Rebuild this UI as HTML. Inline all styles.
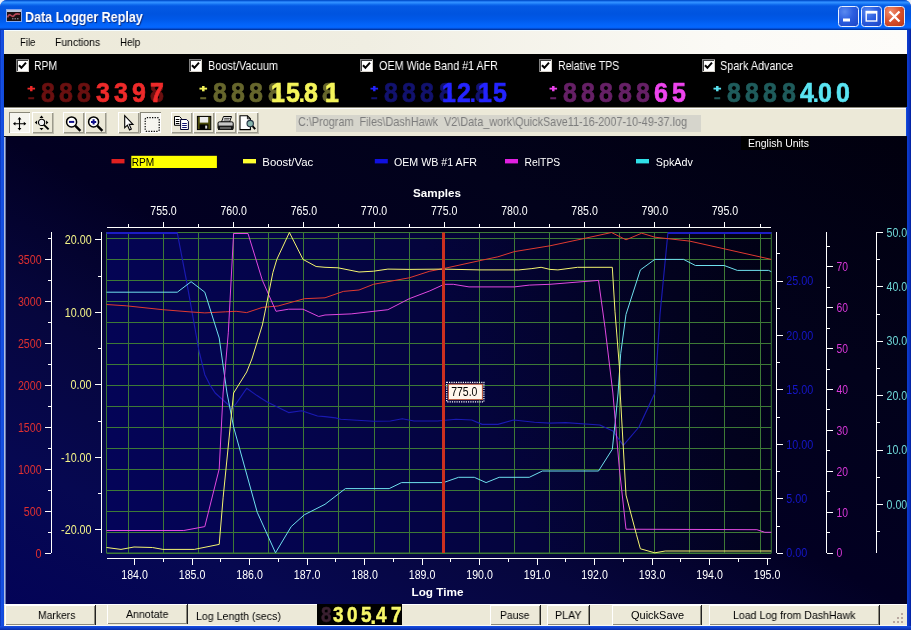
<!DOCTYPE html>
<html><head><meta charset="utf-8"><title>Data Logger Replay</title>
<style>
html,body{margin:0;padding:0}
body{width:911px;height:630px;overflow:hidden;position:relative;background:#e8eef8;font-family:"Liberation Sans",sans-serif;font-size:11.5px;color:#000}
#win{position:absolute;left:0;top:0;width:911px;height:630px;border-radius:7px 7px 0 0;background:linear-gradient(to right,#0830b4 0,#1650e2 1.5px,#1049da 4px,#1049da 906.5px,#0c3acc 907.5px,#0a34c4 909px,#04209c 911px)}
#title{position:absolute;left:0;top:0;width:911px;height:30px;border-radius:7px 7px 0 0;background:linear-gradient(to bottom,#004cc4 0,#0a5cdc 1px,#2c8aff 1.8px,#3090ff 2.8px,#1472f2 4.2px,#0459e4 6px,#0054e0 14px,#0058e8 19px,#0263f8 24px,#0467ff 27.3px,#0452dc 28.4px,#0038a8 29.3px,#0038a8 30px)}
#title .ic{position:absolute;left:6.2px;top:9.2px;width:15.6px;height:12.4px;box-sizing:border-box;background:#1c1012;border:1px solid #86a8ee;box-shadow:inset 0 2px 0 #bcc6dc}
#title .tt{position:absolute;left:25px;top:6.5px;font-weight:bold;font-size:13.5px;color:#fff;white-space:nowrap;text-shadow:1px 1px 1px #0a2a80;letter-spacing:-0.5px;transform-origin:0 0}
.wb{position:absolute;top:6px;width:21px;height:21px;border-radius:3.5px;box-sizing:border-box;border:1px solid #e8f0ff;background:radial-gradient(circle at 30% 25%,#5a8af0 0,#2c5ee0 45%,#1c44c4 100%)}
.wb.x{background:radial-gradient(circle at 30% 25%,#f09070 0,#d8502c 50%,#b83818 100%)}
#menu{position:absolute;left:4px;top:30px;width:903px;height:24px;background:linear-gradient(to right,#ece9d8 0,#f0eee2 40%,#fbfaf6 80%,#fdfcf9 100%);box-shadow:inset 0 1px 0 #f6fdff}
#menu span{position:absolute;top:5.5px;font-size:11.5px;white-space:nowrap}
#gauges{position:absolute;left:4px;top:54px;width:903px;height:53px;background:#000}
.o{position:absolute;left:-4px;top:0}
.t{position:absolute;white-space:nowrap;transform-origin:0 50%;line-height:13px;will-change:transform}
.cb{position:absolute;top:5.3px;width:13px;height:13px;background:#fff;box-sizing:border-box;box-shadow:inset 1px 1px 0 #808080, inset -1px -1px 0 #d4d0c8, inset 2px 2px 0 #404040}
.cb svg{position:absolute;left:0;top:0}
.gl{position:absolute;top:5px;color:#fff;font-size:11.5px;white-space:nowrap;letter-spacing:-0.28px}
.led{position:absolute;top:24px;height:28px;width:150px;will-change:transform}
.led .pl{position:absolute;left:0.4px;top:4.2px;font:bold 13px/13px "Liberation Sans",sans-serif;-webkit-text-stroke:1px currentColor;transform:scaleY(0.72)}
.led .mi{position:absolute;left:2px;top:13.2px;font:bold 13px/13px "Liberation Sans",sans-serif;-webkit-text-stroke:0.6px currentColor;transform:scaleX(1.5)}
.led .dg{position:absolute;left:15.2px;top:0}
.led .c{position:absolute;top:-0.4px;width:14px;text-align:center;font:bold 29px/29px "Liberation Sans",sans-serif;transform:scale(0.86,0.97);transform-origin:0 24.5px;-webkit-text-stroke:0.7px currentColor}
.led .dp{position:absolute;top:1.2px;font:bold 24px/29px "Liberation Sans",sans-serif}
#tool{position:absolute;left:4px;top:107px;width:902px;height:29px;background:#ece9d8;box-shadow:inset 0 1px 0 #8a8878, inset 0 2px 0 #fff}
.tb{position:absolute;top:5px;height:21px;box-sizing:border-box;box-shadow:inset 1px 1px 0 #fff, inset -1px -1px 0 #9c9a8c, 1px 1px 0 #c0beb0}
.tb.p{background:#f6f5ef;box-shadow:inset 1px 1px 0 #8a887a, inset -1px -1px 0 #fff}
.tb svg{position:absolute;left:0.3px;top:0.9px}
#path{position:absolute;left:292px;top:8px;width:404.5px;height:17px;background:#d6d5cc;color:#7c7c7c;font-size:12px;line-height:16px;white-space:pre}
#status{position:absolute;left:4px;top:604px;width:903px;height:21.6px;background:#ece9d8;box-shadow:inset 0 1px 0 #fff, inset 0 -1px 0 #fbfaf4}
#bb{position:absolute;left:0;top:625.6px;width:911px;height:4.4px;background:linear-gradient(to bottom,#1a50e2 0,#0f40cc 45%,#082ca8 100%)}
.sb{position:absolute;top:1px;height:20px;box-sizing:border-box;text-align:center;line-height:19px;font-size:11.5px;background:#ece9d8;box-shadow:inset 1px 1px 0 #fff, inset -1px -1px 0 #8c8a7c, 1px 0 0 #222;white-space:nowrap;letter-spacing:-0.2px}
#sled{position:absolute;left:313px;top:0.2px;width:84.6px;height:20.6px;background:#000;will-change:transform}
.sc{position:absolute;top:0.4px;width:10px;text-align:center;font:bold 21px/21px "Liberation Sans",sans-serif;transform:scale(0.9,1.04);transform-origin:0 50%;-webkit-text-stroke:0.5px currentColor}
.sdp{position:absolute;top:1.7px;font:bold 23px/21px "Liberation Sans",sans-serif}
#grip{position:absolute;left:888px;top:8px;width:12px;height:12px}
text{font-family:"Liberation Sans",sans-serif}
</style></head><body>
<div id="win"></div>
<div id="title"><div class="ic"><svg width="14" height="11" viewBox="0 0 14 11" style="position:absolute;left:0;top:0"><path d="M0.5 7.5Q2 3.5 4 5.5T7.5 5Q9 3.2 13 4.2" stroke="#b84858" stroke-width="1.6" fill="none"/><path d="M5 8.8H12.5" stroke="#a8b0c0" stroke-width="0.9" stroke-dasharray="1.5 1"/></svg></div><span class="t" style="left:24.7px;top:10.6px;font-size:14.5px;font-weight:bold;color:#fff;transform:scaleX(0.8651);text-shadow:1px 1px 1px #0a2a80">Data Logger Replay</span>
<div class="wb" style="left:838px"><svg width="19" height="19" viewBox="0 0 19 19"><rect x="4" y="11.5" width="7" height="3" fill="#fff"/></svg></div>
<div class="wb" style="left:861px"><svg width="19" height="19" viewBox="0 0 19 19"><rect x="4.2" y="4.5" width="10.5" height="9.5" fill="none" stroke="#fff" stroke-width="1.4"/><rect x="4.2" y="4" width="10.5" height="2.6" fill="#fff"/></svg></div>
<div class="wb x" style="left:884px"><svg width="19" height="19" viewBox="0 0 19 19"><path d="M4.5 4.5L14.5 14.5M14.5 4.5L4.5 14.5" stroke="#fff" stroke-width="2.3"/></svg></div>
</div>
<div id="menu"><span class="t" style="left:15.8px;top:6.0px;font-size:11px;font-weight:normal;color:#000;transform:scaleX(0.8684);">File</span><span class="t" style="left:50.9px;top:6.0px;font-size:11px;font-weight:normal;color:#000;transform:scaleX(0.9454);">Functions</span><span class="t" style="left:115.8px;top:6.0px;font-size:11px;font-weight:normal;color:#000;transform:scaleX(0.8928);">Help</span></div>
<div id="gauges"><div class="o"><div class="cb" style="left:16.0px"><svg width="13" height="13" viewBox="0 0 13 13"><path d="M3 6.2 L5.4 8.8 L10 3.6" stroke="#000" stroke-width="2" fill="none"/></svg></div><span class="t" style="left:34.4px;top:6.0px;font-size:12.4px;font-weight:normal;color:#fff;transform:scaleX(0.8349);">RPM</span><div class="led" style="left:26.5px"><span class="pl" style="color:#ee2a2a">+</span><span class="mi" style="color:#6a1010">-</span><div class="dg"><span class="c d" style="left:-1.2px;color:#6a1010">8</span><span class="c d" style="left:17.0px;color:#6a1010">8</span><span class="c d" style="left:35.2px;color:#6a1010">8</span><span class="c" style="left:53.5px;color:#ee2a2a">3</span><span class="c" style="left:71.7px;color:#ee2a2a">3</span><span class="c" style="left:89.9px;color:#ee2a2a">9</span><span class="c d" style="left:108.1px;color:#6a1010">8</span><span class="c" style="left:108.1px;color:#ee2a2a">7</span></div></div><div class="cb" style="left:189.1px"><svg width="13" height="13" viewBox="0 0 13 13"><path d="M3 6.2 L5.4 8.8 L10 3.6" stroke="#000" stroke-width="2" fill="none"/></svg></div><span class="t" style="left:207.5px;top:6.0px;font-size:12.4px;font-weight:normal;color:#fff;transform:scaleX(0.8786);">Boost/Vacuum</span><div class="led" style="left:199.2px"><span class="pl" style="color:#f4f45a">+</span><span class="mi" style="color:#66662c">-</span><div class="dg"><span class="c d" style="left:-1.2px;color:#66662c">8</span><span class="c d" style="left:17.0px;color:#66662c">8</span><span class="c d" style="left:35.2px;color:#66662c">8</span><span class="c d" style="left:53.5px;color:#66662c">8</span><span class="c" style="left:56.7px;color:#f4f45a">1</span><span class="c" style="left:71.7px;color:#f4f45a">5</span><span class="dp" style="left:84.2px;color:#f4f45a">.</span><span class="c" style="left:89.9px;color:#f4f45a">8</span><span class="c d" style="left:108.1px;color:#66662c">8</span><span class="c" style="left:111.3px;color:#f4f45a">1</span></div></div><div class="cb" style="left:360.1px"><svg width="13" height="13" viewBox="0 0 13 13"><path d="M3 6.2 L5.4 8.8 L10 3.6" stroke="#000" stroke-width="2" fill="none"/></svg></div><span class="t" style="left:378.5px;top:6.0px;font-size:12.4px;font-weight:normal;color:#fff;transform:scaleX(0.8683);">OEM Wide Band #1 AFR</span><div class="led" style="left:370.3px"><span class="pl" style="color:#2424ff">+</span><span class="mi" style="color:#12126e">-</span><div class="dg"><span class="c d" style="left:-1.2px;color:#12126e">8</span><span class="c d" style="left:17.0px;color:#12126e">8</span><span class="c d" style="left:35.2px;color:#12126e">8</span><span class="c d" style="left:53.5px;color:#12126e">8</span><span class="c" style="left:56.7px;color:#2424ff">1</span><span class="c" style="left:71.7px;color:#2424ff">2</span><span class="dp" style="left:84.2px;color:#2424ff">.</span><span class="c d" style="left:89.9px;color:#12126e">8</span><span class="c" style="left:93.1px;color:#2424ff">1</span><span class="c" style="left:108.1px;color:#2424ff">5</span></div></div><div class="cb" style="left:539.3px"><svg width="13" height="13" viewBox="0 0 13 13"><path d="M3 6.2 L5.4 8.8 L10 3.6" stroke="#000" stroke-width="2" fill="none"/></svg></div><span class="t" style="left:557.7px;top:6.0px;font-size:12.4px;font-weight:normal;color:#fff;transform:scaleX(0.8503);">Relative TPS</span><div class="led" style="left:549.4px"><span class="pl" style="color:#ee44ee">+</span><span class="mi" style="color:#662066">-</span><div class="dg"><span class="c d" style="left:-1.2px;color:#662066">8</span><span class="c d" style="left:17.0px;color:#662066">8</span><span class="c d" style="left:35.2px;color:#662066">8</span><span class="c d" style="left:53.5px;color:#662066">8</span><span class="c d" style="left:71.7px;color:#662066">8</span><span class="c" style="left:89.9px;color:#ee44ee">6</span><span class="c" style="left:108.1px;color:#ee44ee">5</span></div></div><div class="cb" style="left:701.8px"><svg width="13" height="13" viewBox="0 0 13 13"><path d="M3 6.2 L5.4 8.8 L10 3.6" stroke="#000" stroke-width="2" fill="none"/></svg></div><span class="t" style="left:720.2px;top:6.0px;font-size:12.4px;font-weight:normal;color:#fff;transform:scaleX(0.8757);">Spark Advance</span><div class="led" style="left:713.4px"><span class="pl" style="color:#5ae4f2">+</span><span class="mi" style="color:#1f5c5c">-</span><div class="dg"><span class="c d" style="left:-1.2px;color:#1f5c5c">8</span><span class="c d" style="left:17.0px;color:#1f5c5c">8</span><span class="c d" style="left:35.2px;color:#1f5c5c">8</span><span class="c d" style="left:53.5px;color:#1f5c5c">8</span><span class="c" style="left:71.7px;color:#5ae4f2">4</span><span class="dp" style="left:84.2px;color:#5ae4f2">.</span><span class="c" style="left:89.9px;color:#5ae4f2">0</span><span class="c" style="left:108.1px;color:#5ae4f2">0</span></div></div></div></div>
<div id="tool"><div class="o"><div class="tb p" style="left:9px;width:21px"><svg width="21" height="21" viewBox="0 0 21 21"><path d="M10.5 5V16.5M5 10.7H16.5" stroke="#000" stroke-width="1.1" fill="none"/><path d="M10.5 4l1.9 2.4h-3.8zM10.5 17.4l1.9-2.4h-3.8zM4 10.7l2.4-1.9v3.8zM17.2 10.7l-2.4-1.9v3.8z" fill="#000"/></svg></div><div class="tb" style="left:31.5px;width:21px"><svg width="21" height="21" viewBox="0 0 21 21"><circle cx="9.6" cy="9.4" r="3.1" fill="#f4f4f4" stroke="#000" stroke-width="1.1"/><path d="M12 11.8L16.6 16.4" stroke="#000" stroke-width="1.9"/><path d="M9.5 2.6l2 2.3h-4zM9.5 17.2l2-2.3h-4zM2.8 9.6l2.3-2v4zM16.4 9.6l-2.3-2v4z" fill="#000"/></svg></div><div class="tb" style="left:63px;width:21px"><svg width="21" height="21" viewBox="0 0 21 21"><circle cx="8.6" cy="8.9" r="5" fill="#fff" stroke="#000" stroke-width="1.5"/><path d="M12.4 12.8L17.4 17.8" stroke="#000" stroke-width="2.4"/><path d="M6 8.9H11.2" stroke="#10108a" stroke-width="2"/></svg></div><div class="tb" style="left:85px;width:21px"><svg width="21" height="21" viewBox="0 0 21 21"><circle cx="8.6" cy="8.9" r="5" fill="#fff" stroke="#000" stroke-width="1.5"/><path d="M12.4 12.8L17.4 17.8" stroke="#000" stroke-width="2.4"/><path d="M6 8.9H11.2M8.6 6.3V11.5" stroke="#10108a" stroke-width="2"/></svg></div><div class="tb" style="left:117.5px;width:21px"><svg width="21" height="21" viewBox="0 0 21 21"><path d="M6.7 2.6V14.8L9.4 12.2L11.6 16.9L13.3 16.1L11.2 11.4H15Z" fill="#fff" stroke="#000" stroke-width="1.1" stroke-linejoin="miter"/></svg></div><div class="tb p" style="left:139.5px;width:21px"><svg width="21" height="21" viewBox="0 0 21 21"><rect x="5.2" y="4.6" width="14" height="13.8" rx="1.6" fill="none" stroke="#000" stroke-width="1.2" stroke-dasharray="1.3 1.3"/></svg></div><div class="tb" style="left:171px;width:21px"><svg width="21" height="21" viewBox="0 0 21 21"><path d="M3.5 3.5h5l1.8 1.8v7h-6.8z" fill="#fff" stroke="#000" stroke-width="1"/><path d="M4.8 6.5h3.6M4.8 8.5h3.6M4.8 10.5h3.6" stroke="#000" stroke-width="1"/><path d="M9.6 6.5h6l1.8 1.8v8.2h-7.8z" fill="#fff" stroke="#000030" stroke-width="1"/><path d="M11.2 10.5h4.6M11.2 12.5h4.6M11.2 14.5h4.6" stroke="#101070" stroke-width="1"/></svg></div><div class="tb" style="left:193px;width:21px"><svg width="21" height="21" viewBox="0 0 21 21"><rect x="4.4" y="3.4" width="13.4" height="13.2" fill="#4a4a08" stroke="#000" stroke-width="1"/><rect x="6.8" y="4" width="8.4" height="5.6" fill="#ececec"/><rect x="6.6" y="11.4" width="8.8" height="5.2" fill="#000"/><rect x="12.2" y="12.6" width="2" height="3" fill="#d8d8d8"/></svg></div><div class="tb" style="left:215px;width:21px"><svg width="21" height="21" viewBox="0 0 21 21"><path d="M6.5 9L8.5 3.5h8l-2 5.5z" fill="#fff" stroke="#000" stroke-width="1"/><path d="M9.2 5.3h5.6M8.6 7h5.6" stroke="#000" stroke-width="0.8"/><path d="M3 10.2q0-1.4 1.6-1.4h12q1.6 0 1.6 1.4v5.4h-15.2z" fill="#c8c8c8" stroke="#000" stroke-width="1"/><rect x="3" y="12.6" width="15.2" height="4.4" fill="#181818"/><rect x="5" y="14.4" width="11" height="1.2" fill="#909090"/></svg></div><div class="tb" style="left:237px;width:21px"><svg width="21" height="21" viewBox="0 0 21 21"><path d="M3 2.8h7.4l3 3v10.8h-10.4z" fill="#fff" stroke="#000" stroke-width="1.1"/><path d="M10.4 2.8v3h3" fill="none" stroke="#000" stroke-width="0.9"/><circle cx="13.2" cy="10.6" r="3.2" fill="#86b4ac" stroke="#234" stroke-width="1.1"/><path d="M15.6 13.2L18.2 16.2" stroke="#000" stroke-width="1.9"/></svg></div></div><div id="path"><span class="t" style="left:2.4px;top:1.4px;font-size:12.2px;font-weight:normal;color:#7c7c7c;transform:scaleX(0.8908);white-space:pre">C:\Program  Files\DashHawk  V2\Data_work\QuickSave11-16-2007-10-49-37.log</span></div></div>
<svg id="plot" width="903" height="468" viewBox="4 136 903 468" style="position:absolute;left:4px;top:136px;will-change:transform">
<defs><linearGradient id="bg" gradientUnits="userSpaceOnUse" x1="264.3" y1="738.9" x2="646.7" y2="1.1"><stop offset="0" stop-color="#030357"/><stop offset="0.16" stop-color="#060851"/><stop offset="0.33" stop-color="#06063d"/><stop offset="0.5" stop-color="#020022"/><stop offset="0.72" stop-color="#02021b"/><stop offset="1" stop-color="#01000e"/></linearGradient><linearGradient id="bg2" gradientUnits="userSpaceOnUse" x1="106.5" y1="553.0" x2="796.2" y2="300.5"><stop offset="0" stop-color="#04045a"/><stop offset="0.3" stop-color="#04044c"/><stop offset="0.55" stop-color="#04043c"/><stop offset="0.7" stop-color="#03032c"/><stop offset="0.85" stop-color="#02021e"/><stop offset="1" stop-color="#010114"/></linearGradient></defs>
<rect x="4" y="136" width="903" height="468" fill="url(#bg)"/>
<rect x="4" y="136" width="1.6" height="468" fill="#aebfe6"/>
<rect x="4" y="136" width="903" height="1" fill="#050510"/>
<rect x="741" y="136" width="69" height="14" fill="#000"/>
<text x="748" y="147" font-size="11.5" fill="#fff" textLength="61" lengthAdjust="spacingAndGlyphs">English Units</text>
<rect x="111.5" y="159" width="13" height="4.4" fill="#e02020"/>
<rect x="131.3" y="155.8" width="85.6" height="12.2" fill="#ffff00"/>
<text x="131.8" y="165.5" font-size="11.5" fill="#000" textLength="22.5" lengthAdjust="spacingAndGlyphs">RPM</text>
<rect x="243" y="159" width="13" height="4.4" fill="#ffff30"/>
<text x="262.3" y="165.5" font-size="11.5" fill="#fff" textLength="51" lengthAdjust="spacingAndGlyphs">Boost/Vac</text>
<rect x="374.8" y="159" width="13" height="4.4" fill="#1010e0"/>
<text x="393.9" y="165.5" font-size="11.5" fill="#fff" textLength="83" lengthAdjust="spacingAndGlyphs">OEM WB #1 AFR</text>
<rect x="505" y="159" width="13" height="4.4" fill="#e020e0"/>
<text x="524.6" y="165.5" font-size="11.5" fill="#fff" textLength="35.6" lengthAdjust="spacingAndGlyphs">RelTPS</text>
<rect x="636" y="159" width="13" height="4.4" fill="#30e0e8"/>
<text x="655.8" y="165.5" font-size="11.5" fill="#fff" textLength="37" lengthAdjust="spacingAndGlyphs">SpkAdv</text>
<text x="437" y="196.5" font-size="11.5" font-weight="bold" fill="#fff" text-anchor="middle" textLength="48" lengthAdjust="spacingAndGlyphs">Samples</text>
<text x="437.5" y="596" font-size="11.5" font-weight="bold" fill="#fff" text-anchor="middle" textLength="52" lengthAdjust="spacingAndGlyphs">Log Time</text>
<rect x="106.5" y="232.5" width="664.8" height="320.5" fill="url(#bg2)"/>
<path d="M128.4 232.5V553.0M163.5 232.5V553.0M198.6 232.5V553.0M233.7 232.5V553.0M268.8 232.5V553.0M303.9 232.5V553.0M338.9 232.5V553.0M374.0 232.5V553.0M409.1 232.5V553.0M444.2 232.5V553.0M479.3 232.5V553.0M514.4 232.5V553.0M549.5 232.5V553.0M584.6 232.5V553.0M619.7 232.5V553.0M654.8 232.5V553.0M689.8 232.5V553.0M724.9 232.5V553.0M760.0 232.5V553.0M106.5 553.0H771.3M106.5 532.0H771.3M106.5 511.1H771.3M106.5 490.1H771.3M106.5 469.1H771.3M106.5 448.1H771.3M106.5 427.2H771.3M106.5 406.2H771.3M106.5 385.2H771.3M106.5 364.3H771.3M106.5 343.3H771.3M106.5 322.3H771.3M106.5 301.4H771.3M106.5 280.4H771.3M106.5 259.4H771.3M106.5 238.5H771.3" stroke="#3d7a36" stroke-width="1" fill="none" shape-rendering="crispEdges"/>
<rect x="106.5" y="232.5" width="664.8" height="320.5" fill="none" stroke="#3d7a36" stroke-width="1"/>
<polyline points="106.5,233.0 177.3,233.0 186.4,280.4 199.0,351.0 204.8,374.7 210.0,385.0 215.2,393.0 228.3,404.8 231.7,409.0 236.2,403.5 246.7,388.3 257.0,395.6 266.7,401.7 288.6,412.6 301.7,410.8 317.4,416.0 325.0,416.6 335.5,417.9 340.7,419.2 373.5,421.3 390.5,421.0 402.3,418.7 414.0,421.0 437.6,421.0 456.0,419.2 471.7,420.0 482.2,424.4 497.9,424.4 513.6,420.0 534.5,422.3 550.0,423.1 565.7,422.6 599.8,425.0 612.9,431.0 623.3,445.4 639.0,427.0 654.8,393.0 660.0,314.4 667.9,233.0 771.3,233.0" fill="none" stroke="#1a1ab2" stroke-width="1.15" stroke-linejoin="round"/>
<path d="M106.5 233H177.3M667.9 233H771.3" stroke="#1c1cc4" stroke-width="1.8" fill="none"/>
<polyline points="106.5,304.5 126.2,305.8 162.9,309.7 189.0,311.8 204.8,312.9 225.7,311.8 236.2,311.3 246.7,312.6 262.4,307.4 278.1,306.0 304.3,298.7 325.0,297.8 343.3,291.4 359.0,290.0 373.5,284.3 409.3,277.8 429.8,271.2 443.4,268.6 479.5,260.7 497.9,256.8 514.4,251.6 550.0,245.8 584.0,238.5 611.5,232.5 626.0,239.8 641.7,233.2 654.8,237.2 689.6,241.1 725.0,249.0 771.3,259.4" fill="none" stroke="#e03a30" stroke-width="1.0" stroke-linejoin="round"/>
<polyline points="106.5,292.2 177.3,292.2 191.1,281.7 204.8,292.2 219.2,338.0 227.0,393.0 233.6,427.0 257.2,512.2 275.5,552.8 291.2,526.6 304.3,514.8 325.0,504.3 345.4,488.6 389.2,488.6 401.5,482.6 443.4,482.6 458.6,477.3 474.3,477.3 486.1,482.6 499.2,477.3 529.3,477.3 542.4,471.0 598.5,471.0 612.3,449.3 615.5,419.2 618.1,393.0 620.7,353.7 626.0,314.4 640.4,269.9 654.8,259.4 683.6,259.4 695.4,265.5 724.2,265.5 737.3,270.4 768.7,270.4 771.3,271.7" fill="none" stroke="#6fe0ee" stroke-width="1.0" stroke-linejoin="round"/>
<polyline points="106.5,530.5 183.8,530.5 204.8,526.6 219.2,469.0 223.1,393.0 228.3,332.8 233.6,233.5 248.0,233.5 262.4,280.4 276.0,311.3 288.6,309.2 303.0,309.2 318.7,316.5 325.0,315.0 351.2,313.9 387.9,309.7 409.3,298.7 429.8,290.9 444.2,284.3 453.3,284.3 469.0,286.9 514.4,286.9 529.3,285.1 550.0,284.3 598.5,280.4 605.0,327.5 612.9,393.0 619.4,469.0 626.0,529.2 756.9,529.7 764.8,532.3 771.3,532.3" fill="none" stroke="#e048e0" stroke-width="1.0" stroke-linejoin="round"/>
<polyline points="106.5,547.5 121.0,549.4 134.0,547.0 152.4,547.5 162.9,549.4 194.3,549.4 219.2,544.4 223.1,497.8 233.6,393.0 246.7,372.0 251.9,359.0 262.4,324.9 272.9,272.5 276.8,259.4 289.4,232.5 303.0,259.4 316.1,266.5 325.0,267.3 338.0,267.8 359.0,272.0 373.5,271.2 387.9,269.1 409.3,269.4 443.4,269.1 479.5,269.9 518.8,269.9 531.9,268.6 541.1,267.3 550.0,269.4 557.9,269.9 577.5,267.3 612.3,267.3 615.0,311.8 619.4,366.8 620.2,393.0 626.0,495.1 636.4,534.4 640.4,548.8 654.8,552.8 665.2,551.0 771.3,551.0" fill="none" stroke="#f4f470" stroke-width="1.0" stroke-linejoin="round"/>
<rect x="442" y="232.5" width="3" height="320.5" fill="#cc3020"/>
<rect x="446.7" y="382.4" width="37.2" height="19.4" fill="none" stroke="#fff" stroke-width="1.2" stroke-dasharray="1.2 1.1"/>
<rect x="448.4" y="384.2" width="34" height="15.4" fill="#fff6ec" stroke="#c0583c" stroke-width="1"/>
<text x="464.3" y="396.4" font-size="13" fill="#000" text-anchor="middle" textLength="26.2" lengthAdjust="spacingAndGlyphs">775.0</text>
<path d="M106.5 227.3H771.3M128.4 227.3V224.3M163.5 227.3V221.5M198.6 227.3V224.3M233.7 227.3V221.5M268.8 227.3V224.3M303.9 227.3V221.5M338.9 227.3V224.3M374.0 227.3V221.5M409.1 227.3V224.3M444.2 227.3V221.5M479.3 227.3V224.3M514.4 227.3V221.5M549.5 227.3V224.3M584.6 227.3V221.5M619.7 227.3V224.3M654.8 227.3V221.5M689.8 227.3V224.3M724.9 227.3V221.5M760.0 227.3V224.3" stroke="#fff" stroke-width="1" fill="none" shape-rendering="crispEdges"/>
<text x="163.5" y="215" font-size="12.5" fill="#fff" text-anchor="middle" textLength="26.5" lengthAdjust="spacingAndGlyphs">755.0</text>
<text x="233.7" y="215" font-size="12.5" fill="#fff" text-anchor="middle" textLength="26.5" lengthAdjust="spacingAndGlyphs">760.0</text>
<text x="303.9" y="215" font-size="12.5" fill="#fff" text-anchor="middle" textLength="26.5" lengthAdjust="spacingAndGlyphs">765.0</text>
<text x="374.0" y="215" font-size="12.5" fill="#fff" text-anchor="middle" textLength="26.5" lengthAdjust="spacingAndGlyphs">770.0</text>
<text x="444.2" y="215" font-size="12.5" fill="#fff" text-anchor="middle" textLength="26.5" lengthAdjust="spacingAndGlyphs">775.0</text>
<text x="514.4" y="215" font-size="12.5" fill="#fff" text-anchor="middle" textLength="26.5" lengthAdjust="spacingAndGlyphs">780.0</text>
<text x="584.6" y="215" font-size="12.5" fill="#fff" text-anchor="middle" textLength="26.5" lengthAdjust="spacingAndGlyphs">785.0</text>
<text x="654.8" y="215" font-size="12.5" fill="#fff" text-anchor="middle" textLength="26.5" lengthAdjust="spacingAndGlyphs">790.0</text>
<text x="724.9" y="215" font-size="12.5" fill="#fff" text-anchor="middle" textLength="26.5" lengthAdjust="spacingAndGlyphs">795.0</text>
<text x="134.6" y="578.9" font-size="12.5" fill="#fff" text-anchor="middle" textLength="26.5" lengthAdjust="spacingAndGlyphs">184.0</text>
<text x="192.1" y="578.9" font-size="12.5" fill="#fff" text-anchor="middle" textLength="26.5" lengthAdjust="spacingAndGlyphs">185.0</text>
<text x="249.6" y="578.9" font-size="12.5" fill="#fff" text-anchor="middle" textLength="26.5" lengthAdjust="spacingAndGlyphs">186.0</text>
<text x="307.1" y="578.9" font-size="12.5" fill="#fff" text-anchor="middle" textLength="26.5" lengthAdjust="spacingAndGlyphs">187.0</text>
<text x="364.6" y="578.9" font-size="12.5" fill="#fff" text-anchor="middle" textLength="26.5" lengthAdjust="spacingAndGlyphs">188.0</text>
<text x="422.1" y="578.9" font-size="12.5" fill="#fff" text-anchor="middle" textLength="26.5" lengthAdjust="spacingAndGlyphs">189.0</text>
<text x="479.6" y="578.9" font-size="12.5" fill="#fff" text-anchor="middle" textLength="26.5" lengthAdjust="spacingAndGlyphs">190.0</text>
<text x="537.1" y="578.9" font-size="12.5" fill="#fff" text-anchor="middle" textLength="26.5" lengthAdjust="spacingAndGlyphs">191.0</text>
<text x="594.6" y="578.9" font-size="12.5" fill="#fff" text-anchor="middle" textLength="26.5" lengthAdjust="spacingAndGlyphs">192.0</text>
<text x="652.1" y="578.9" font-size="12.5" fill="#fff" text-anchor="middle" textLength="26.5" lengthAdjust="spacingAndGlyphs">193.0</text>
<text x="709.6" y="578.9" font-size="12.5" fill="#fff" text-anchor="middle" textLength="26.5" lengthAdjust="spacingAndGlyphs">194.0</text>
<text x="767.1" y="578.9" font-size="12.5" fill="#fff" text-anchor="middle" textLength="26.5" lengthAdjust="spacingAndGlyphs">195.0</text>
<path d="M106.5 558.4H771.3M134.6 558.4V564.8M163.3 558.4V561.6M192.1 558.4V564.8M220.8 558.4V561.6M249.6 558.4V564.8M278.4 558.4V561.6M307.1 558.4V564.8M335.9 558.4V561.6M364.6 558.4V564.8M393.4 558.4V561.6M422.1 558.4V564.8M450.9 558.4V561.6M479.6 558.4V564.8M508.4 558.4V561.6M537.1 558.4V564.8M565.9 558.4V561.6M594.6 558.4V564.8M623.4 558.4V561.6M652.1 558.4V564.8M680.9 558.4V561.6M709.6 558.4V564.8M738.4 558.4V561.6M767.1 558.4V564.8" stroke="#fff" stroke-width="1" fill="none" shape-rendering="crispEdges"/>
<path d="M51.4 232V553M51.4 553.3h-6.3M51.4 532.3h-3.2M51.4 511.3h-6.3M51.4 490.3h-3.2M51.4 469.3h-6.3M51.4 448.3h-3.2M51.4 427.4h-6.3M51.4 406.4h-3.2M51.4 385.4h-6.3M51.4 364.4h-3.2M51.4 343.4h-6.3M51.4 322.4h-3.2M51.4 301.4h-6.3M51.4 280.4h-3.2M51.4 259.4h-6.3M51.4 238.4h-3.2" stroke="#fff" stroke-width="1" fill="none" shape-rendering="crispEdges"/>
<text x="41.6" y="557.5" font-size="12.5" fill="#e03030" text-anchor="end" textLength="6" lengthAdjust="spacingAndGlyphs">0</text>
<text x="41.6" y="515.5" font-size="12.5" fill="#e03030" text-anchor="end" textLength="17.8" lengthAdjust="spacingAndGlyphs">500</text>
<text x="41.6" y="473.5" font-size="12.5" fill="#e03030" text-anchor="end" textLength="23.7" lengthAdjust="spacingAndGlyphs">1000</text>
<text x="41.6" y="431.6" font-size="12.5" fill="#e03030" text-anchor="end" textLength="23.7" lengthAdjust="spacingAndGlyphs">1500</text>
<text x="41.6" y="389.6" font-size="12.5" fill="#e03030" text-anchor="end" textLength="23.7" lengthAdjust="spacingAndGlyphs">2000</text>
<text x="41.6" y="347.6" font-size="12.5" fill="#e03030" text-anchor="end" textLength="23.7" lengthAdjust="spacingAndGlyphs">2500</text>
<text x="41.6" y="305.6" font-size="12.5" fill="#e03030" text-anchor="end" textLength="23.7" lengthAdjust="spacingAndGlyphs">3000</text>
<text x="41.6" y="263.6" font-size="12.5" fill="#e03030" text-anchor="end" textLength="23.7" lengthAdjust="spacingAndGlyphs">3500</text>
<path d="M101.1 232V553M101.1 529.8h-6.3M101.1 493.5h-3.2M101.1 457.3h-6.3M101.1 421.0h-3.2M101.1 384.8h-6.3M101.1 348.5h-3.2M101.1 312.3h-6.3M101.1 276.0h-3.2M101.1 239.8h-6.3" stroke="#fff" stroke-width="1" fill="none" shape-rendering="crispEdges"/>
<text x="91.6" y="389.0" font-size="12.5" fill="#f4f488" text-anchor="end" textLength="21" lengthAdjust="spacingAndGlyphs">0.00</text>
<text x="91.6" y="316.5" font-size="12.5" fill="#f4f488" text-anchor="end" textLength="26.8" lengthAdjust="spacingAndGlyphs">10.00</text>
<text x="91.6" y="244.0" font-size="12.5" fill="#f4f488" text-anchor="end" textLength="26.8" lengthAdjust="spacingAndGlyphs">20.00</text>
<text x="91.6" y="461.5" font-size="12.5" fill="#f4f488" text-anchor="end" textLength="30.5" lengthAdjust="spacingAndGlyphs">-10.00</text>
<text x="91.6" y="534.0" font-size="12.5" fill="#f4f488" text-anchor="end" textLength="30.5" lengthAdjust="spacingAndGlyphs">-20.00</text>
<path d="M776.7 232V553M776.7 553.2h6.3M776.7 526.0h3.2M776.7 498.8h6.3M776.7 471.5h3.2M776.7 444.3h6.3M776.7 417.1h3.2M776.7 389.9h6.3M776.7 362.7h3.2M776.7 335.4h6.3M776.7 308.2h3.2M776.7 281.0h6.3M776.7 253.8h3.2" stroke="#fff" stroke-width="1" fill="none" shape-rendering="crispEdges"/>
<text x="786.3" y="557.4" font-size="12.5" fill="#1616c8" text-anchor="start" textLength="21" lengthAdjust="spacingAndGlyphs">0.00</text>
<text x="786.3" y="503.0" font-size="12.5" fill="#1616c8" text-anchor="start" textLength="21" lengthAdjust="spacingAndGlyphs">5.00</text>
<text x="786.3" y="448.5" font-size="12.5" fill="#1616c8" text-anchor="start" textLength="27" lengthAdjust="spacingAndGlyphs">10.00</text>
<text x="786.3" y="394.1" font-size="12.5" fill="#1616c8" text-anchor="start" textLength="27" lengthAdjust="spacingAndGlyphs">15.00</text>
<text x="786.3" y="339.6" font-size="12.5" fill="#1616c8" text-anchor="start" textLength="27" lengthAdjust="spacingAndGlyphs">20.00</text>
<text x="786.3" y="285.2" font-size="12.5" fill="#1616c8" text-anchor="start" textLength="27" lengthAdjust="spacingAndGlyphs">25.00</text>
<path d="M826.9 232V553M826.9 553.2h6.3M826.9 532.7h3.2M826.9 512.3h6.3M826.9 491.8h3.2M826.9 471.3h6.3M826.9 450.8h3.2M826.9 430.4h6.3M826.9 409.9h3.2M826.9 389.4h6.3M826.9 369.0h3.2M826.9 348.5h6.3M826.9 328.0h3.2M826.9 307.6h6.3M826.9 287.1h3.2M826.9 266.6h6.3M826.9 246.1h3.2" stroke="#fff" stroke-width="1" fill="none" shape-rendering="crispEdges"/>
<text x="836.6" y="557.4" font-size="12.5" fill="#d838d8" text-anchor="start" textLength="5.8" lengthAdjust="spacingAndGlyphs">0</text>
<text x="836.6" y="516.5" font-size="12.5" fill="#d838d8" text-anchor="start" textLength="11.5" lengthAdjust="spacingAndGlyphs">10</text>
<text x="836.6" y="475.5" font-size="12.5" fill="#d838d8" text-anchor="start" textLength="11.5" lengthAdjust="spacingAndGlyphs">20</text>
<text x="836.6" y="434.6" font-size="12.5" fill="#d838d8" text-anchor="start" textLength="11.5" lengthAdjust="spacingAndGlyphs">30</text>
<text x="836.6" y="393.6" font-size="12.5" fill="#d838d8" text-anchor="start" textLength="11.5" lengthAdjust="spacingAndGlyphs">40</text>
<text x="836.6" y="352.7" font-size="12.5" fill="#d838d8" text-anchor="start" textLength="11.5" lengthAdjust="spacingAndGlyphs">50</text>
<text x="836.6" y="311.8" font-size="12.5" fill="#d838d8" text-anchor="start" textLength="11.5" lengthAdjust="spacingAndGlyphs">60</text>
<text x="836.6" y="270.8" font-size="12.5" fill="#d838d8" text-anchor="start" textLength="11.5" lengthAdjust="spacingAndGlyphs">70</text>
<path d="M876.7 232V553M876.7 531.6h3.2M876.7 504.4h6.3M876.7 477.2h3.2M876.7 450.0h6.3M876.7 422.8h3.2M876.7 395.6h6.3M876.7 368.4h3.2M876.7 341.2h6.3M876.7 314.0h3.2M876.7 286.8h6.3M876.7 259.6h3.2M876.7 232.4h6.3" stroke="#fff" stroke-width="1" fill="none" shape-rendering="crispEdges"/>
<text x="886.6" y="508.6" font-size="12.5" fill="#6fd8d8" textLength="20.6" lengthAdjust="spacingAndGlyphs">0.00</text>
<text x="886.6" y="454.2" font-size="12.5" fill="#6fd8d8" textLength="20.6" lengthAdjust="spacingAndGlyphs">10.0</text>
<text x="886.6" y="399.8" font-size="12.5" fill="#6fd8d8" textLength="20.6" lengthAdjust="spacingAndGlyphs">20.0</text>
<text x="886.6" y="345.4" font-size="12.5" fill="#6fd8d8" textLength="20.6" lengthAdjust="spacingAndGlyphs">30.0</text>
<text x="886.6" y="291.0" font-size="12.5" fill="#6fd8d8" textLength="20.6" lengthAdjust="spacingAndGlyphs">40.0</text>
<text x="886.6" y="236.6" font-size="12.5" fill="#6fd8d8" textLength="20.6" lengthAdjust="spacingAndGlyphs">50.0</text>
</svg>
<div id="bb"></div>
<div id="status">
<div class="sb" style="left:0.5px;width:90.5px"></div><span class="t" style="left:33.9px;top:4.5px;font-size:11px;font-weight:normal;color:#000;transform:scaleX(0.9413);">Markers</span>
<div class="sb" style="left:103px;width:79.5px;top:-0.5px;height:20.5px"></div><span class="t" style="left:122.3px;top:3.5px;font-size:11px;font-weight:normal;color:#000;transform:scaleX(0.9626);">Annotate</span>
<span class="t" style="left:191.7px;top:5.5px;font-size:11px;font-weight:normal;color:#000;transform:scaleX(0.9630);">Log Length (secs)</span>
<div id="sled"><span class="sc" style="left:3.6px;color:#3a2030">8</span><span class="sc" style="left:16.3px;color:#f6f668">3</span><span class="sc" style="left:30.4px;color:#f6f668">0</span><span class="sc" style="left:44.4px;color:#f6f668">5</span><span class="sdp" style="left:53.0px;color:#f6f668">.</span><span class="sc" style="left:59.2px;color:#f6f668">4</span><span class="sc" style="left:73.6px;color:#f6f668">7</span></div>
<div class="sb" style="left:486px;width:50px"></div><span class="t" style="left:495.9px;top:4.5px;font-size:11px;font-weight:normal;color:#000;transform:scaleX(0.9454);">Pause</span>
<div class="sb" style="left:543px;width:42px"></div><span class="t" style="left:550.7px;top:4.5px;font-size:11px;font-weight:normal;color:#000;transform:scaleX(0.9703);">PLAY</span>
<div class="sb" style="left:607.5px;width:89px"></div><span class="t" style="left:626.5px;top:4.5px;font-size:11px;font-weight:normal;color:#000;transform:scaleX(0.9962);">QuickSave</span>
<div class="sb" style="left:705px;width:169.5px"></div><span class="t" style="left:728.8px;top:4.5px;font-size:11px;font-weight:normal;color:#000;transform:scaleX(0.9624);">Load Log from DashHawk</span>
<svg id="grip" viewBox="0 0 12 12"><path d="M9 1h2v2h-2zM5 5h2v2h-2zM9 5h2v2h-2zM1 9h2v2h-2zM5 9h2v2h-2zM9 9h2v2h-2z" fill="#b8a8a0"/></svg>
</div>
</body></html>
